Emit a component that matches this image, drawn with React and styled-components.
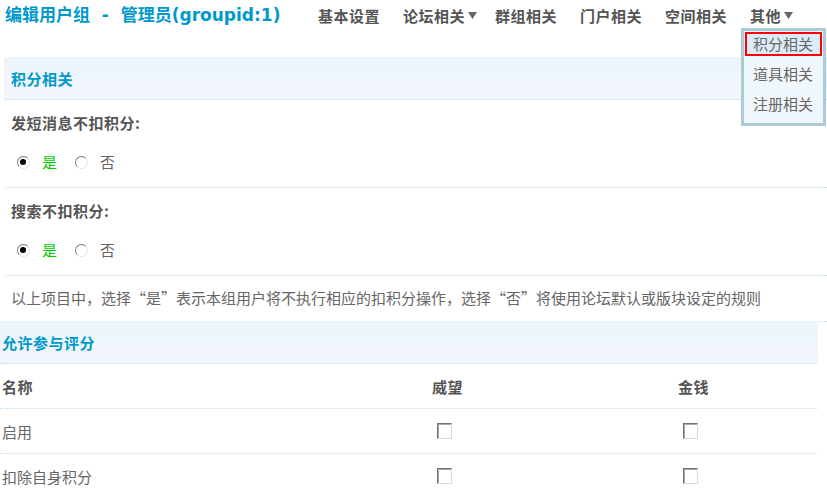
import React from "react";
import styled, { createGlobalStyle, css } from "styled-components";

const GlobalStyle = createGlobalStyle`
  html, body {
    margin: 0;
    padding: 0;
    background: #fff;
  }
  body {
    font-family: "Noto Sans CJK SC", "DejaVu Sans", sans-serif;
    font-size: 15px;
    color: #666;
  }
`;

const Page = styled.div`
  width: 827px;
  overflow: hidden;
`;

const TopBar = styled.div`
  display: flex;
  align-items: center;
  height: 30px;
  margin-bottom: 27px;
`;

const Title = styled.h1`
  margin: 0;
  padding-left: 5px;
  width: 301.5px;
  flex: none;
  font-family: "DejaVu Sans", "Noto Sans CJK SC", sans-serif;
  font-size: 17px;
  font-weight: bold;
  color: #09c;
  white-space: nowrap;
  line-height: 30px;
`;

const Nav = styled.ul`
  display: flex;
  margin: 0;
  padding: 0;
  list-style: none;
`;

const NavItem = styled.li`
  position: relative;
  display: flex;
  align-items: center;
  height: 30px;
  padding: 0 11.5px;
  font-size: 15px;
  font-weight: bold;
  letter-spacing: 0.5px;
  color: #555;
  white-space: nowrap;
  margin-right: ${p => (p.$tight ? "-5px" : "0")};
`;

const Caret = styled.svg`
  width: 9px;
  height: 8px;
  margin-left: 3px;
  fill: #666;
`;

const Menu = styled.div`
  position: absolute;
  top: 28px;
  left: 2.5px;
  width: 85px;
  height: 98px;
  box-sizing: border-box;
  border: 3px solid #aacbd7;
  background: #f0f7fc;
  padding: 1px;
  z-index: 2;
  letter-spacing: 0;
`;

const MenuItem = styled.div`
  height: 24px;
  line-height: 20px;
  margin-bottom: 6px;
  padding-left: 6px;
  box-sizing: border-box;
  font-weight: normal;
  font-size: 15px;
  color: #666;
  border: 2px solid transparent;
  ${p =>
    p.$active &&
    css`
      border-color: #f00;
      background: #dcebf7;
    `}
`;

const Section = styled.div`
  margin-left: ${p => p.$indent || 0}px;
`;

const Band = styled.h3`
  margin: 0;
  height: 43px;
  line-height: 43px;
  padding-left: ${p => p.$pad}px;
  width: ${p => (p.$width ? `${p.$width}px` : "auto")};
  box-sizing: border-box;
  background: linear-gradient(#ecf4fb, #f2f7fc);
  border-bottom: 1px dotted #c6dff0;
  font-size: 15px;
  font-weight: bold;
  letter-spacing: 0.5px;
  color: #09c;
  margin-top: ${p => (p.$overlap ? "-1px" : "0")};
`;

const Label = styled.div`
  padding: 13px 0 11px 7px;
  line-height: 20px;
  font-weight: bold;
  letter-spacing: 0.5px;
  color: #555;
`;

const RadioRow = styled.div`
  display: flex;
  align-items: center;
  padding: 8px 0 15px 13px;
  line-height: 20px;
  border-bottom: 1px dotted #c6dff0;
`;

const Option = styled.label`
  display: flex;
  align-items: center;
  gap: 12px;
  margin-right: 18px;
  color: ${p => (p.$on ? "#00cc00" : "#666")};
`;

const Radio = styled.span`
  position: relative;
  display: inline-block;
  width: 13px;
  height: 13px;
  box-sizing: border-box;
  border-radius: 50%;
  border: 1.5px solid;
  border-color: #7b7b7b #e2e2e2 #e2e2e2 #7b7b7b;
  background: #fff;
  ${p =>
    p.$checked &&
    css`
      &::after {
        content: "";
        position: absolute;
        left: 2px;
        top: 2px;
        width: 6px;
        height: 6px;
        border-radius: 50%;
        background: #000;
      }
    `}
`;

const Tip = styled.div`
  padding: 12px 0 13px 7px;
  line-height: 20px;
  color: #666;
  font-size: 15px;
  border-bottom: 1px dotted #c6dff0;
  white-space: nowrap;
`;

const Table = styled.div`
  width: 818px;
`;

const Row = styled.div`
  display: grid;
  grid-template-columns: 430px 246px 1fr;
  align-items: center;
  height: 44px;
  border-bottom: 1px dotted #c6dff0;
  font-weight: ${p => (p.$head ? "bold" : "normal")};
  letter-spacing: ${p => (p.$head ? "0.5px" : "0")};
  color: ${p => (p.$head ? "#555" : "#666")};
`;

const Cell = styled.div`
  padding-left: 2px;
  display: flex;
  align-items: center;
`;

const Check = styled.span`
  display: inline-block;
  width: 15px;
  height: 16px;
  margin-left: 5px;
  box-sizing: border-box;
  border: 1px solid;
  border-color: #707070 #dadada #dadada #707070;
  box-shadow: inset 1px 1px 0 #a8a8a8;
  background: #fff;
`;

const Arrow = () => (
  <Caret viewBox="0 0 9 8">
    <path d="M0 1h9L4.5 8z" />
  </Caret>
);

const YesNo = () => (
  <RadioRow>
    <Option $on>
      <Radio $checked />是
    </Option>
    <Option>
      <Radio />否
    </Option>
  </RadioRow>
);

const App = () => {
  const nav = ["基本设置", "论坛相关", "群组相关", "门户相关", "空间相关"];
  return (
    <>
      <GlobalStyle />
      <Page>
        <TopBar>
          <Title>编辑用户组 &nbsp;-&nbsp; 管理员(groupid:1)</Title>
          <Nav>
            {nav.map(n => (
              <NavItem key={n} $tight={n === "论坛相关"}>
                {n}
                {n === "论坛相关" && <Arrow />}
              </NavItem>
            ))}
            <NavItem>
              其他
              <Arrow />
              <Menu>
                <MenuItem $active>积分相关</MenuItem>
                <MenuItem>道具相关</MenuItem>
                <MenuItem>注册相关</MenuItem>
              </Menu>
            </NavItem>
          </Nav>
        </TopBar>

        <Section $indent={4}>
          <Band $pad={7}>积分相关</Band>
          <Label>发短消息不扣积分:</Label>
          <YesNo />
          <Label>搜索不扣积分:</Label>
          <YesNo />
          <Tip>以上项目中，选择“是”表示本组用户将不执行相应的扣积分操作，选择“否”将使用论坛默认或版块设定的规则</Tip>
        </Section>

        <Section>
          <Band $pad={2} $width={818} $overlap>
            允许参与评分
          </Band>
          <Table>
            <Row $head>
              <Cell>名称</Cell>
              <Cell>威望</Cell>
              <Cell>金钱</Cell>
            </Row>
            <Row>
              <Cell>启用</Cell>
              <Cell>
                <Check />
              </Cell>
              <Cell>
                <Check />
              </Cell>
            </Row>
            <Row>
              <Cell>扣除自身积分</Cell>
              <Cell>
                <Check />
              </Cell>
              <Cell>
                <Check />
              </Cell>
            </Row>
          </Table>
        </Section>
      </Page>
    </>
  );
};

export default App;
